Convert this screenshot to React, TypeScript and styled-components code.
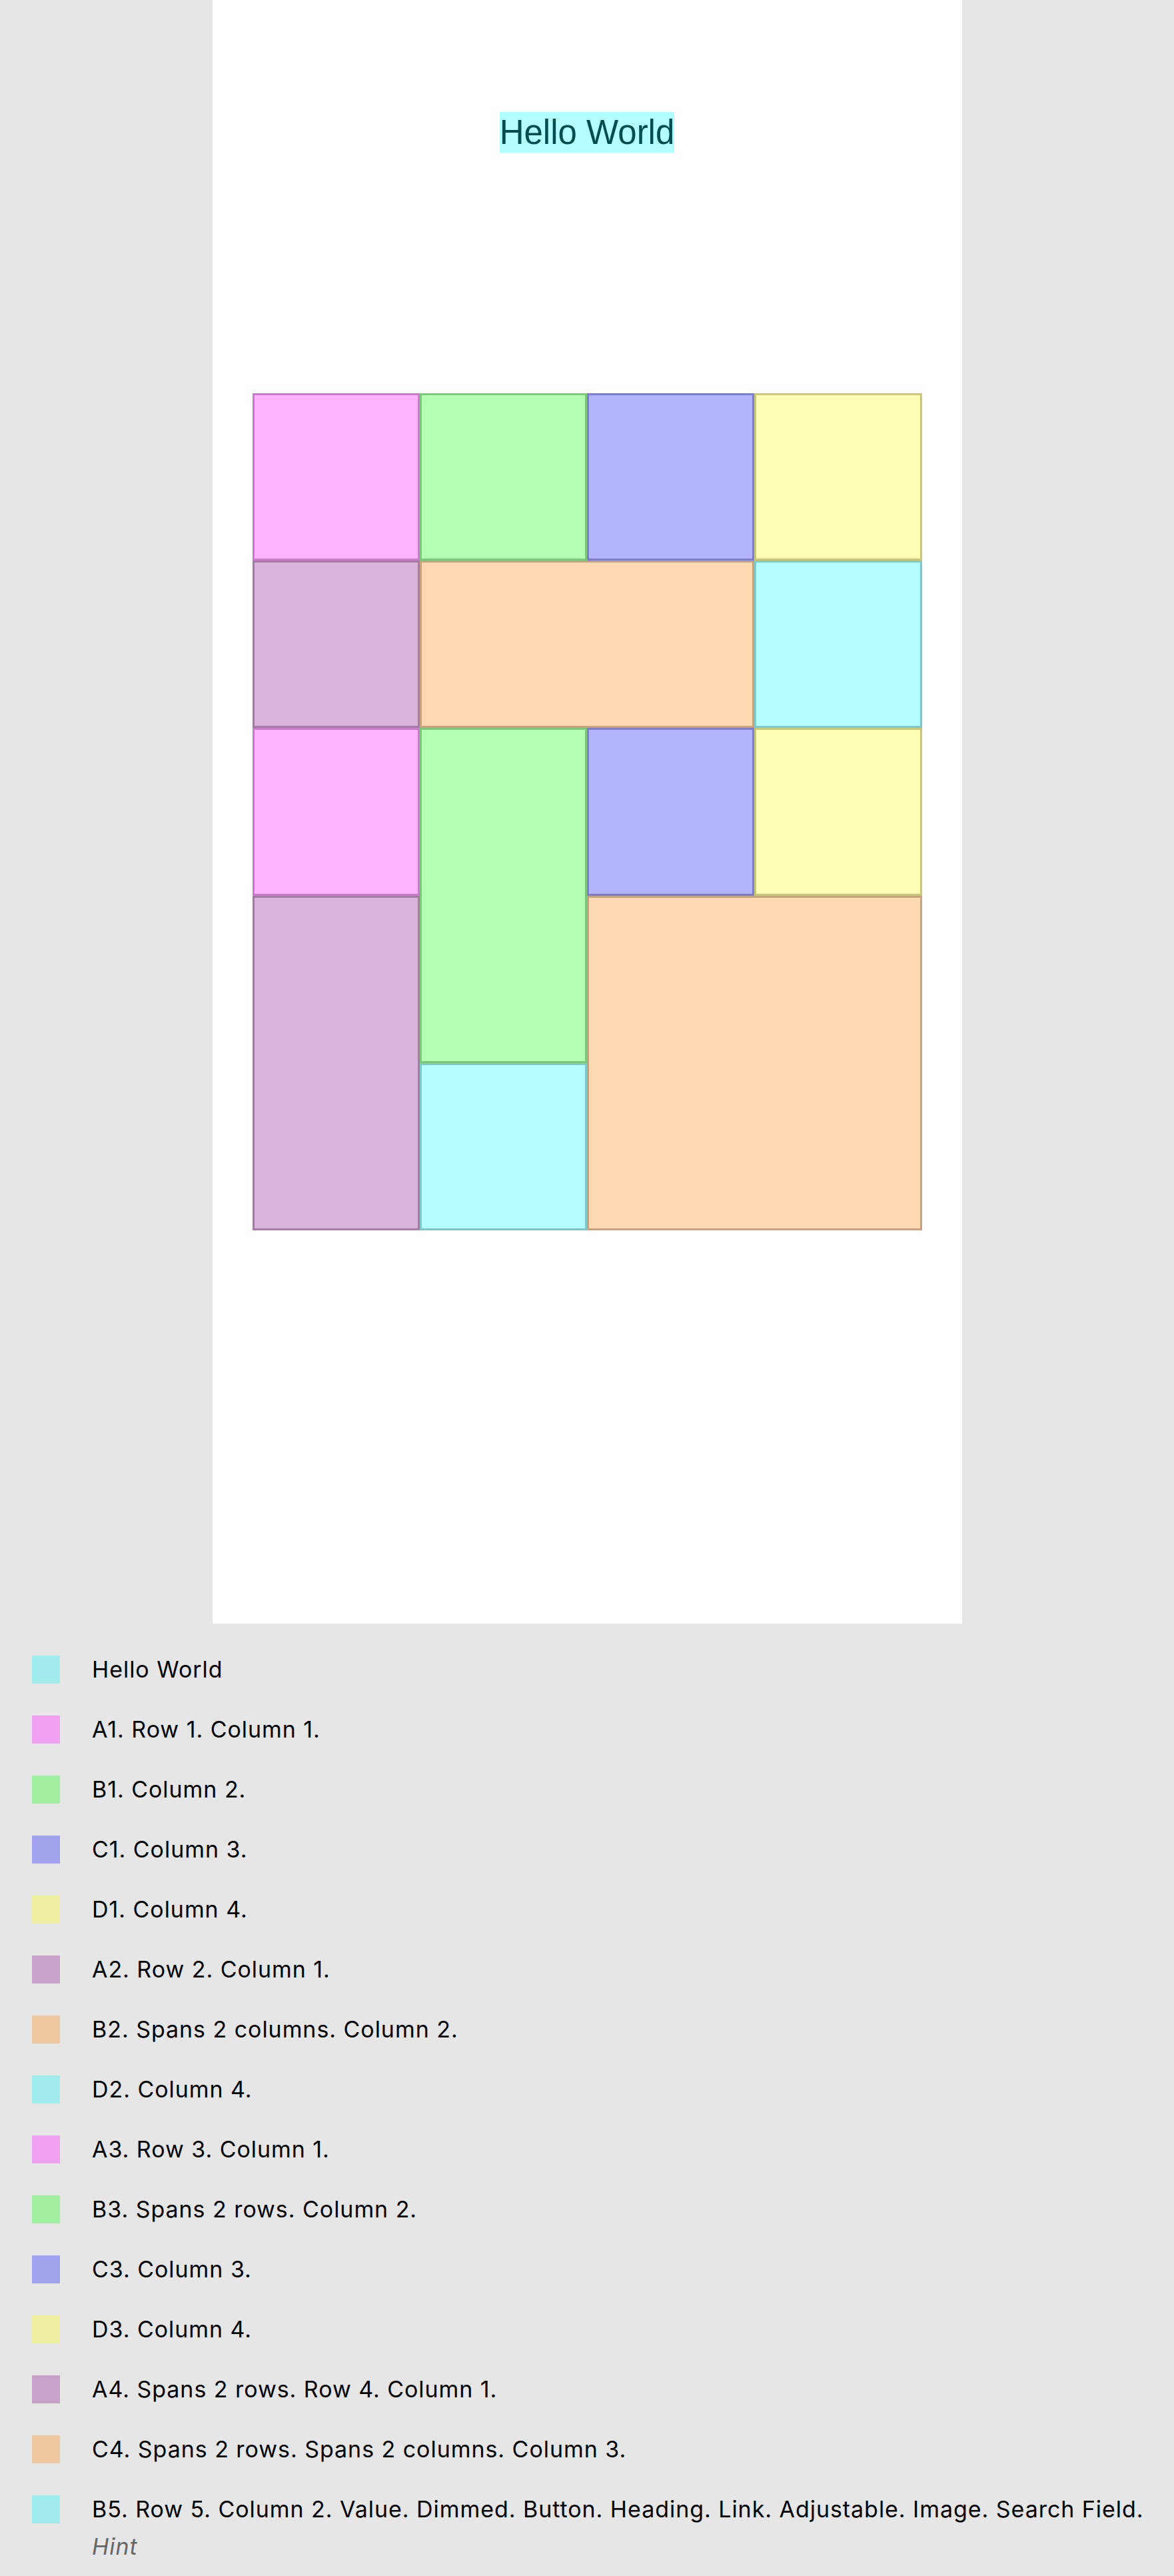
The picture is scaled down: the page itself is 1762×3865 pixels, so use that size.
import React from 'react';
import styled, { createGlobalStyle } from 'styled-components';

type Tone = {
  fill: string;
  edge: string;
  swatch: string;
};

const tones: Record<string, Tone> = {
  pink: { fill: '#ffb3ff', edge: '#c87dc8', swatch: '#eea1ee' },
  green: { fill: '#b3ffb3', edge: '#7dc87d', swatch: '#a1eea1' },
  blue: { fill: '#b3b3ff', edge: '#7d7dc8', swatch: '#a1a1ee' },
  yellow: { fill: '#ffffb3', edge: '#c8c87d', swatch: '#eeeea1' },
  mauve: { fill: '#d9b3d9', edge: '#a27ca2', swatch: '#c7a1c7' },
  peach: { fill: '#ffd9b3', edge: '#c8a27c', swatch: '#eec7a1' },
  cyan: { fill: '#b3ffff', edge: '#7dc8c8', swatch: '#a1eded' },
};

type Cell = {
  id: string;
  tone: keyof typeof tones;
  col: string;
  row: string;
  label: string;
};

const cells: Cell[] = [
  { id: 'A1', tone: 'pink', col: '1', row: '1', label: 'A1. Row 1. Column 1.' },
  { id: 'B1', tone: 'green', col: '2', row: '1', label: 'B1. Column 2.' },
  { id: 'C1', tone: 'blue', col: '3', row: '1', label: 'C1. Column 3.' },
  { id: 'D1', tone: 'yellow', col: '4', row: '1', label: 'D1. Column 4.' },
  { id: 'A2', tone: 'mauve', col: '1', row: '2', label: 'A2. Row 2. Column 1.' },
  { id: 'B2', tone: 'peach', col: '2 / span 2', row: '2', label: 'B2. Spans 2 columns. Column 2.' },
  { id: 'D2', tone: 'cyan', col: '4', row: '2', label: 'D2. Column 4.' },
  { id: 'A3', tone: 'pink', col: '1', row: '3', label: 'A3. Row 3. Column 1.' },
  { id: 'B3', tone: 'green', col: '2', row: '3 / span 2', label: 'B3. Spans 2 rows. Column 2.' },
  { id: 'C3', tone: 'blue', col: '3', row: '3', label: 'C3. Column 3.' },
  { id: 'D3', tone: 'yellow', col: '4', row: '3', label: 'D3. Column 4.' },
  { id: 'A4', tone: 'mauve', col: '1', row: '4 / span 2', label: 'A4. Spans 2 rows. Row 4. Column 1.' },
  { id: 'C4', tone: 'peach', col: '3 / span 2', row: '4 / span 2', label: 'C4. Spans 2 rows. Spans 2 columns. Column 3.' },
  {
    id: 'B5',
    tone: 'cyan',
    col: '2',
    row: '5',
    label: 'B5. Row 5. Column 2. Value. Dimmed. Button. Heading. Link. Adjustable. Image. Search Field.',
  },
];

const GlobalStyle = createGlobalStyle`
  html, body {
    margin: 0;
    padding: 0;
    background: #e6e6e6;
  }

  body {
    min-height: 3865px;
    font-family: Inter, "Liberation Sans", sans-serif;
  }
`;

const Page = styled.div`
  display: flex;
  flex-direction: column;
  align-items: stretch;
`;

const Phone = styled.section`
  align-self: center;
  width: 1125px;
  height: 2436px;
  background: #ffffff;
  display: flex;
  flex-direction: column;
  align-items: center;
  padding-top: 168px;
  box-sizing: border-box;
`;

const Title = styled.span`
  display: inline-block;
  background: #b3ffff;
  color: #004d4d;
  font-family: "Liberation Sans", Arial, sans-serif;
  font-size: 51px;
  line-height: 61px;
  height: 61px;
`;

const Board = styled.div`
  margin-top: 361px;
  width: 1005px;
  display: grid;
  grid-template-columns: repeat(4, 1fr);
  grid-template-rows: repeat(5, 251.2px);
`;

const Block = styled.div<{ $tone: Tone; $col: string; $row: string }>`
  grid-column: ${({ $col }) => $col};
  grid-row: ${({ $row }) => $row};
  background: ${({ $tone }) => $tone.fill};
  border: 3px solid ${({ $tone }) => $tone.edge};
  box-sizing: border-box;
`;

const Legend = styled.ul`
  list-style: none;
  margin: 0;
  padding: 48px 0 24px 48px;
  display: flex;
  flex-direction: column;
  gap: 48px;
`;

const Entry = styled.li`
  display: flex;
  align-items: flex-start;
  gap: 48px;
`;

const Swatch = styled.span<{ $color: string }>`
  flex: none;
  width: 42px;
  height: 42px;
  background: ${({ $color }) => $color};
`;

const EntryText = styled.div`
  display: flex;
  flex-direction: column;
  gap: 14px;
`;

const Line = styled.span`
  font-size: 34px;
  line-height: 42px;
  letter-spacing: 0.95px;
  color: #000000;
  white-space: nowrap;
`;

const Hint = styled(Line)`
  font-style: italic;
  color: #666666;
`;

export default function App() {
  return (
    <Page>
      <GlobalStyle />
      <Phone>
        <Title>Hello World</Title>
        <Board>
          {cells.map((cell) => (
            <Block key={cell.id} $tone={tones[cell.tone]} $col={cell.col} $row={cell.row} />
          ))}
        </Board>
      </Phone>
      <Legend>
        <Entry>
          <Swatch $color={tones.cyan.swatch} />
          <EntryText>
            <Line>Hello World</Line>
          </EntryText>
        </Entry>
        {cells.map((cell) => (
          <Entry key={cell.id}>
            <Swatch $color={tones[cell.tone].swatch} />
            <EntryText>
              <Line>{cell.label}</Line>
              {cell.id === 'B5' && <Hint>Hint</Hint>}
            </EntryText>
          </Entry>
        ))}
      </Legend>
    </Page>
  );
}
